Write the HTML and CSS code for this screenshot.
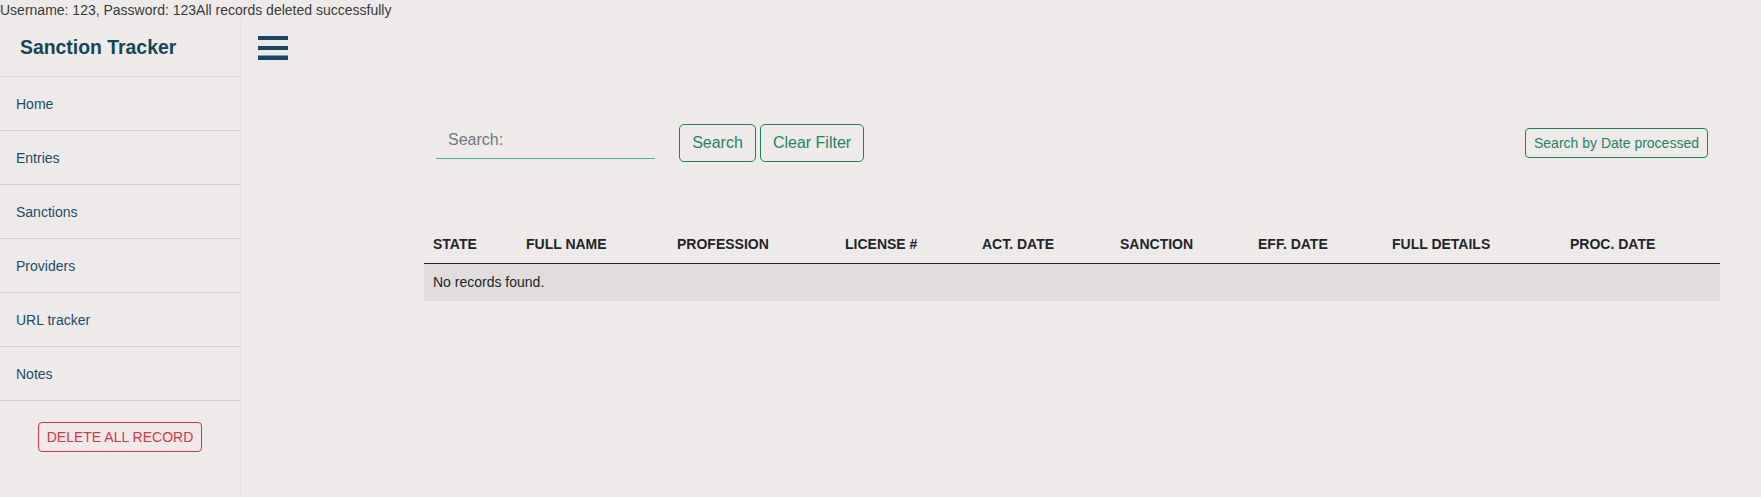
FILE: index.html
```html
<!DOCTYPE html>
<html lang="en">
<head>
<meta charset="utf-8">
<title>Sanction Tracker</title>
<link rel="stylesheet" href="styles.css">
</head>
<body>
<div class="top-msg">Username: 123, Password: 123All records deleted successfully</div>
<div class="layout">
  <aside class="sidebar">
    <div class="brand">Sanction Tracker</div>
    <nav class="nav">
      <a class="nav-item" href="#">Home</a>
      <a class="nav-item" href="#">Entries</a>
      <a class="nav-item" href="#">Sanctions</a>
      <a class="nav-item" href="#">Providers</a>
      <a class="nav-item" href="#">URL tracker</a>
      <a class="nav-item" href="#">Notes</a>
    </nav>
    <div class="delete-wrap">
      <button class="btn-delete">DELETE ALL RECORD</button>
    </div>
  </aside>
  <main class="main">
    <button class="menu-toggle" aria-label="Toggle menu">
      <svg width="30" height="24" viewBox="0 0 30 24"><rect x="0" y="0" width="30" height="4" fill="#174766"/><rect x="0" y="10" width="30" height="4" fill="#174766"/><rect x="0" y="19.5" width="30" height="4.5" fill="#174766"/></svg>
    </button>
    <section class="content">
      <div class="search-row">
        <input class="search-input" type="text" placeholder="Search:">
        <button class="btn-outline btn-search">Search</button>
        <button class="btn-outline btn-clear">Clear Filter</button>
        <button class="btn-outline btn-date">Search by Date processed</button>
      </div>
      <table class="records">
        <colgroup>
          <col class="c1"><col class="c2"><col class="c3"><col class="c4"><col class="c5"><col class="c6"><col class="c7"><col class="c8"><col class="c9">
        </colgroup>
        <thead>
          <tr>
            <th>STATE</th><th>FULL NAME</th><th>PROFESSION</th><th>LICENSE #</th><th>ACT. DATE</th><th>SANCTION</th><th>EFF. DATE</th><th>FULL DETAILS</th><th>PROC. DATE</th>
          </tr>
        </thead>
        <tbody>
          <tr class="empty-row"><td colspan="9">No records found.</td></tr>
        </tbody>
      </table>
    </section>
  </main>
</div>
</body>
</html>
```
FILE: styles.css
```css
* { box-sizing: border-box; }
html, body { margin: 0; padding: 0; }
body {
  background: #eeeae9;
  font-family: "Liberation Sans", Arial, sans-serif;
  color: #212529;
  height: 497px;
  overflow: hidden;
}
.top-msg {
  font-size: 14px;
  line-height: 20px;
  height: 20px;
  color: #3a3a3a;
  white-space: nowrap;
}
.layout {
  display: flex;
  height: 477px;
}
.sidebar {
  width: 241px;
  flex: 0 0 241px;
  border-right: 1px solid #dde0e6;
  display: flex;
  flex-direction: column;
}
.brand {
  height: 57px;
  padding: 0 0 2px 20px;
  display: flex;
  align-items: center;
  font-size: 19.4px;
  font-weight: bold;
  color: #124858;
  border-bottom: 1px solid #dcdde1;
}
.nav { display: flex; flex-direction: column; }
.nav-item {
  height: 54px;
  display: flex;
  align-items: center;
  padding: 0 16px;
  font-size: 14px;
  color: #1d4c6a;
  text-decoration: none;
  border-bottom: 1px solid #d2cfce;
}
.delete-wrap {
  display: flex;
  justify-content: center;
  padding-top: 21px;
}
.btn-delete {
  font-family: inherit;
  font-size: 14px;
  line-height: 20px;
  padding: 4px 0;
  height: 30px;
  width: 164px;
  white-space: nowrap;
  text-align: center;
  color: #dc3545;
  background: transparent;
  border: 1px solid #dc3545;
  border-radius: 4px;
}
.main {
  flex: 1;
  padding: 16px 0 0 17px;
}
.menu-toggle {
  display: block;
  padding: 0;
  margin: 0;
  border: 0;
  background: transparent;
  width: 30px;
  height: 24px;
}
.menu-toggle svg { display: block; }
.content {
  margin: 61px 0 0 166px;
  width: 1296px;
}
.search-row {
  display: flex;
  align-items: flex-start;
  padding: 0 12px;
}
.search-input {
  width: 219px;
  height: 38px;
  padding: 0 12px;
  border: 0;
  border-bottom: 1px solid #3db3a0;
  background: transparent;
  font-family: inherit;
  font-size: 16px;
  color: #495057;
  outline: none;
}
.search-input::placeholder { color: #707880; }
.btn-outline {
  font-family: inherit;
  background: transparent;
  color: #1a8763;
  border: 1px solid #198754;
  white-space: nowrap;
}
.btn-search, .btn-clear {
  margin-top: 3px;
  height: 38px;
  font-size: 16px;
  line-height: 24px;
  padding: 6px 0;
  text-align: center;
  border-radius: 5px;
}
.btn-search { margin-left: 24px; width: 77px; }
.btn-clear { margin-left: 4px; width: 104px; }
.btn-date {
  margin-left: auto;
  margin-top: 7px;
  height: 30px;
  width: 183px;
  font-size: 14px;
  line-height: 20px;
  padding: 4px 0;
  text-align: center;
  border-radius: 4px;
}
.records {
  margin-top: 65px;
  width: 1296px;
  table-layout: fixed;
  border-collapse: collapse;
}
.c1 { width: 93px; }
.c2 { width: 151px; }
.c3 { width: 168px; }
.c4 { width: 137px; }
.c5 { width: 138px; }
.c6 { width: 138px; }
.c7 { width: 134px; }
.c8 { width: 178px; }
.c9 { width: 159px; }
.records th {
  text-align: left;
  font-size: 14px;
  font-weight: bold;
  line-height: 20px;
  padding: 7px 9px 9px 9px;
  color: #212529;
  border-bottom: 1px solid #212529;
  white-space: nowrap;
}
.records td {
  font-size: 14px;
  line-height: 21px;
  padding: 8px 8px 8px 9px;
  color: #212529;
}
.empty-row td { background: #e0dddc; }
```
